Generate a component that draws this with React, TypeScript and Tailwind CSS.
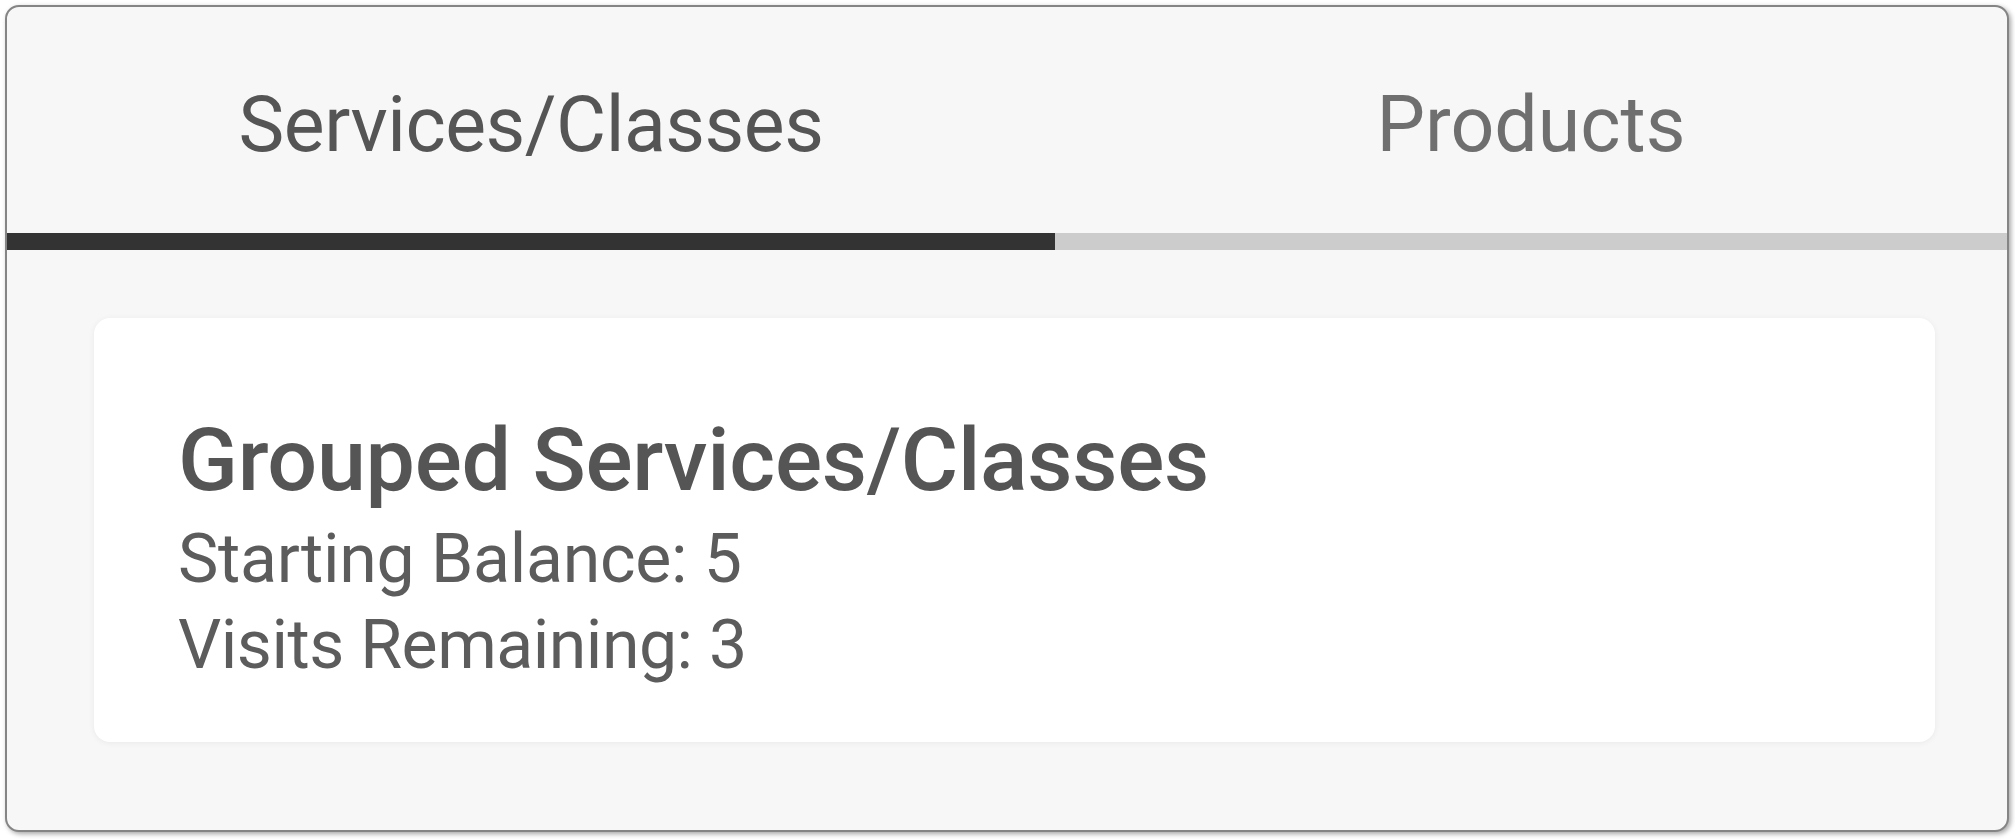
export default function App() {
  return (
    <div className="w-[2015px] h-[839px] bg-white pl-[5px] pt-[5px] font-['Roboto','Noto_Sans',sans-serif]">
      <div className="w-[2004px] h-[827px] flex flex-col overflow-hidden rounded-[14px] border-2 border-[#858585] bg-[#f7f7f7] shadow-[2px_2px_5px_rgba(0,0,0,0.35)]">
        {/* tabs */}
        <div className="flex h-[226px] shrink-0">
          <div className="w-[1048px] flex justify-center pt-[80px] text-[77px] leading-none tracking-[-0.5px] text-[#555555]">
            Services/Classes
          </div>
          <div className="flex-1 flex justify-center pt-[80px] text-[77px] leading-none text-[#6f6f6f]">Products</div>
        </div>
        <div className="flex h-[17px] shrink-0">
          <div className="w-[1048px] bg-[#333333]" />
          <div className="flex-1 bg-[#cccccc]" />
        </div>

        {/* content */}
        <div className="pt-[68px] pl-[87px] pr-[72px]">
          <div className="h-[424px] rounded-[16px] bg-white pl-[84px] pt-[96px] shadow-[0_1px_6px_rgba(0,0,0,0.06)]">
            <h2 className="text-[88px] leading-[92px] font-medium tracking-[-0.3px] text-[#555555]">
              Grouped Services/Classes
            </h2>
            <p className="mt-[10px] text-[68px] leading-[86px] tracking-[-0.3px] text-[#5c5c5c]">Starting Balance: 5</p>
            <p className="text-[68px] leading-[86px] tracking-[-0.5px] text-[#5c5c5c]">Visits Remaining: 3</p>
          </div>
        </div>
      </div>
    </div>
  );
}
